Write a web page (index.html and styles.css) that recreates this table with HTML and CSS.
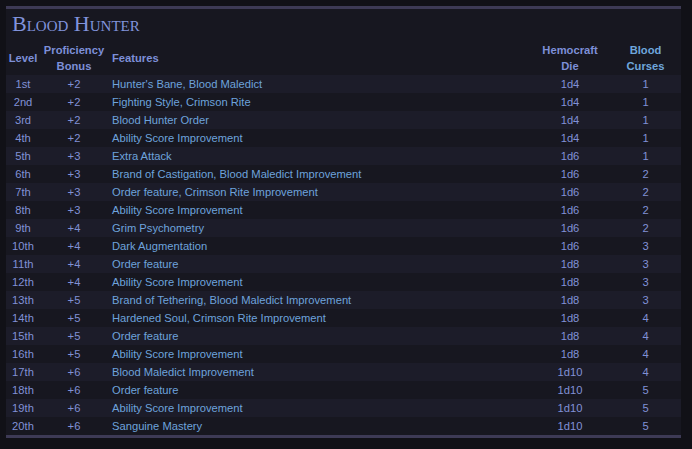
FILE: index.html
```html
<!DOCTYPE html>
<html>
<head>
<meta charset="utf-8">
<link rel="stylesheet" href="styles.css">
</head>
<body>
<div class="panel">
  <h1 class="title">Blood Hunter</h1>
  <table class="classtable">
    <colgroup>
      <col class="c-level"><col class="c-prof"><col class="c-feat"><col class="c-die"><col class="c-curse">
    </colgroup>
    <thead>
      <tr>
        <th>Level</th>
        <th>Proficiency<br>Bonus</th>
        <th class="left">Features</th>
        <th>Hemocraft<br>Die</th>
        <th class="curse-h">Blood<br>Curses</th>
      </tr>
    </thead>
    <tbody>
      <tr><td>1st</td><td>+2</td><td class="feat">Hunter's Bane, Blood Maledict</td><td>1d4</td><td>1</td></tr>
      <tr><td>2nd</td><td>+2</td><td class="feat">Fighting Style, Crimson Rite</td><td>1d4</td><td>1</td></tr>
      <tr><td>3rd</td><td>+2</td><td class="feat">Blood Hunter Order</td><td>1d4</td><td>1</td></tr>
      <tr><td>4th</td><td>+2</td><td class="feat">Ability Score Improvement</td><td>1d4</td><td>1</td></tr>
      <tr><td>5th</td><td>+3</td><td class="feat">Extra Attack</td><td>1d6</td><td>1</td></tr>
      <tr><td>6th</td><td>+3</td><td class="feat">Brand of Castigation, Blood Maledict Improvement</td><td>1d6</td><td>2</td></tr>
      <tr><td>7th</td><td>+3</td><td class="feat">Order feature, Crimson Rite Improvement</td><td>1d6</td><td>2</td></tr>
      <tr><td>8th</td><td>+3</td><td class="feat">Ability Score Improvement</td><td>1d6</td><td>2</td></tr>
      <tr><td>9th</td><td>+4</td><td class="feat">Grim Psychometry</td><td>1d6</td><td>2</td></tr>
      <tr><td>10th</td><td>+4</td><td class="feat">Dark Augmentation</td><td>1d6</td><td>3</td></tr>
      <tr><td>11th</td><td>+4</td><td class="feat">Order feature</td><td>1d8</td><td>3</td></tr>
      <tr><td>12th</td><td>+4</td><td class="feat">Ability Score Improvement</td><td>1d8</td><td>3</td></tr>
      <tr><td>13th</td><td>+5</td><td class="feat">Brand of Tethering, Blood Maledict Improvement</td><td>1d8</td><td>3</td></tr>
      <tr><td>14th</td><td>+5</td><td class="feat">Hardened Soul, Crimson Rite Improvement</td><td>1d8</td><td>4</td></tr>
      <tr><td>15th</td><td>+5</td><td class="feat">Order feature</td><td>1d8</td><td>4</td></tr>
      <tr><td>16th</td><td>+5</td><td class="feat">Ability Score Improvement</td><td>1d8</td><td>4</td></tr>
      <tr><td>17th</td><td>+6</td><td class="feat">Blood Maledict Improvement</td><td>1d10</td><td>4</td></tr>
      <tr><td>18th</td><td>+6</td><td class="feat">Order feature</td><td>1d10</td><td>5</td></tr>
      <tr><td>19th</td><td>+6</td><td class="feat">Ability Score Improvement</td><td>1d10</td><td>5</td></tr>
      <tr><td>20th</td><td>+6</td><td class="feat">Sanguine Mastery</td><td>1d10</td><td>5</td></tr>
    </tbody>
  </table>
</div>
</body>
</html>
```
FILE: styles.css
```css
html, body {
  margin: 0;
  padding: 0;
  background: #111117;
  height: 100%;
}
body {
  padding: 6px 0 0 6px;
  box-sizing: border-box;
  font-family: "Liberation Sans", Arial, sans-serif;
}
.panel {
  width: 675px;
  background: #171720;
  border-top: 3px solid #3d3a55;
  border-bottom: 3px solid #3d3a55;
}
.title {
  margin: 0;
  padding: 3px 0 0 6px;
  height: 30px;
  font-family: "Liberation Serif", "Times New Roman", serif;
  font-variant: small-caps;
  font-weight: normal;
  font-size: 22px;
  line-height: 24px;
  color: #8193dc;
}
.classtable {
  width: 675px;
  border-collapse: collapse;
  table-layout: fixed;
  font-size: 11.2px;
}
.c-level { width: 34px; }
.c-prof { width: 68px; }
.c-feat { width: 422px; }
.c-die { width: 80px; }
.c-curse { width: 71px; }
.classtable th {
  font-weight: bold;
  color: #7d8fd8;
  line-height: 16px;
  padding: 0 0 1px 0;
  vertical-align: middle;
  text-align: center;
  height: 32px;
}
.classtable th.left {
  text-align: left;
  padding-left: 4px;
}
.classtable th.curse-h {
  color: #6ea6dc;
}
.classtable td {
  height: 18px;
  padding: 0;
  line-height: 18px;
  text-align: center;
  color: #8191d6;
  white-space: nowrap;
}
.classtable td.feat {
  text-align: left;
  padding-left: 4px;
  color: #6ea3dc;
}
.classtable tbody tr:nth-child(odd) {
  background: #1c1c29;
}
```
